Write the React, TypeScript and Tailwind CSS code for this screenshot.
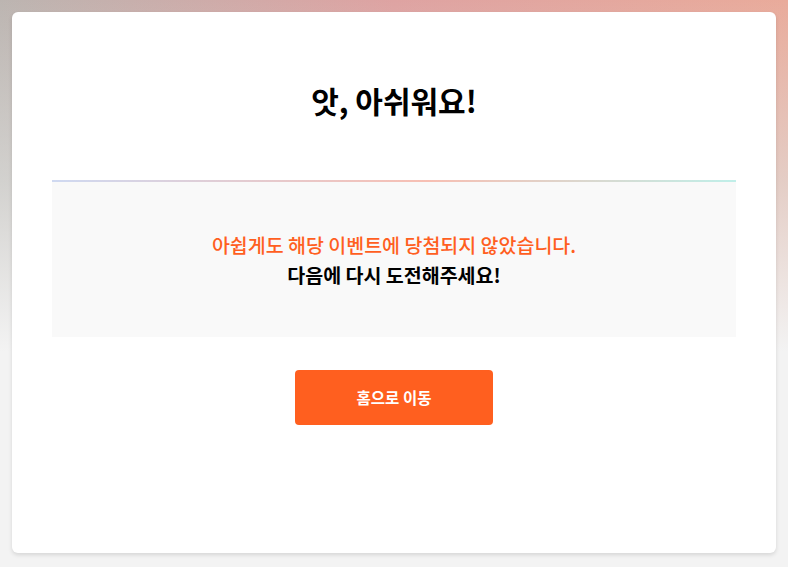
export default function App() {
  return (
    <div
      className="min-h-[567px] w-full bg-[#f3f3f3] bg-[linear-gradient(to_bottom,rgba(243,243,243,0)_0%,rgba(225,228,226,0.6)_32%,#f3f3f3_62%),linear-gradient(to_right,#bcb5b1_0%,#dea3a2_50%,#e9ab9b_100%)] p-3 font-['Noto_Sans_CJK_KR','Noto_Sans',sans-serif]"
    >
      <div className="flex h-[541px] flex-col items-center rounded-md bg-white px-10 pt-[67px] shadow-[0_2px_4px_rgba(0,0,0,0.12)]">
        <h1 className="text-[30px] font-bold leading-[42px] text-black">
          앗, 아쉬워요!
        </h1>
        <div className="mt-[59px] h-[2px] w-full bg-[linear-gradient(to_right,#cfd9f1_0%,#f7bfb3_55%,#c0efe9_100%)]" />
        <div className="flex h-[155px] w-full flex-col items-center justify-center bg-[#f9f9f9] text-[19.5px] leading-[30px]">
          <p className="font-medium text-[#ff5f1f]">아쉽게도 해당 이벤트에 당첨되지 않았습니다.</p>
          <p className="font-semibold text-black">다음에 다시 도전해주세요!</p>
        </div>
        <button className="mt-[33px] flex h-[55px] w-[198px] items-center justify-center rounded-[4px] bg-[#ff5f1f] text-[15.5px] font-bold text-white">
          홈으로 이동
        </button>
      </div>
    </div>
  );
}
